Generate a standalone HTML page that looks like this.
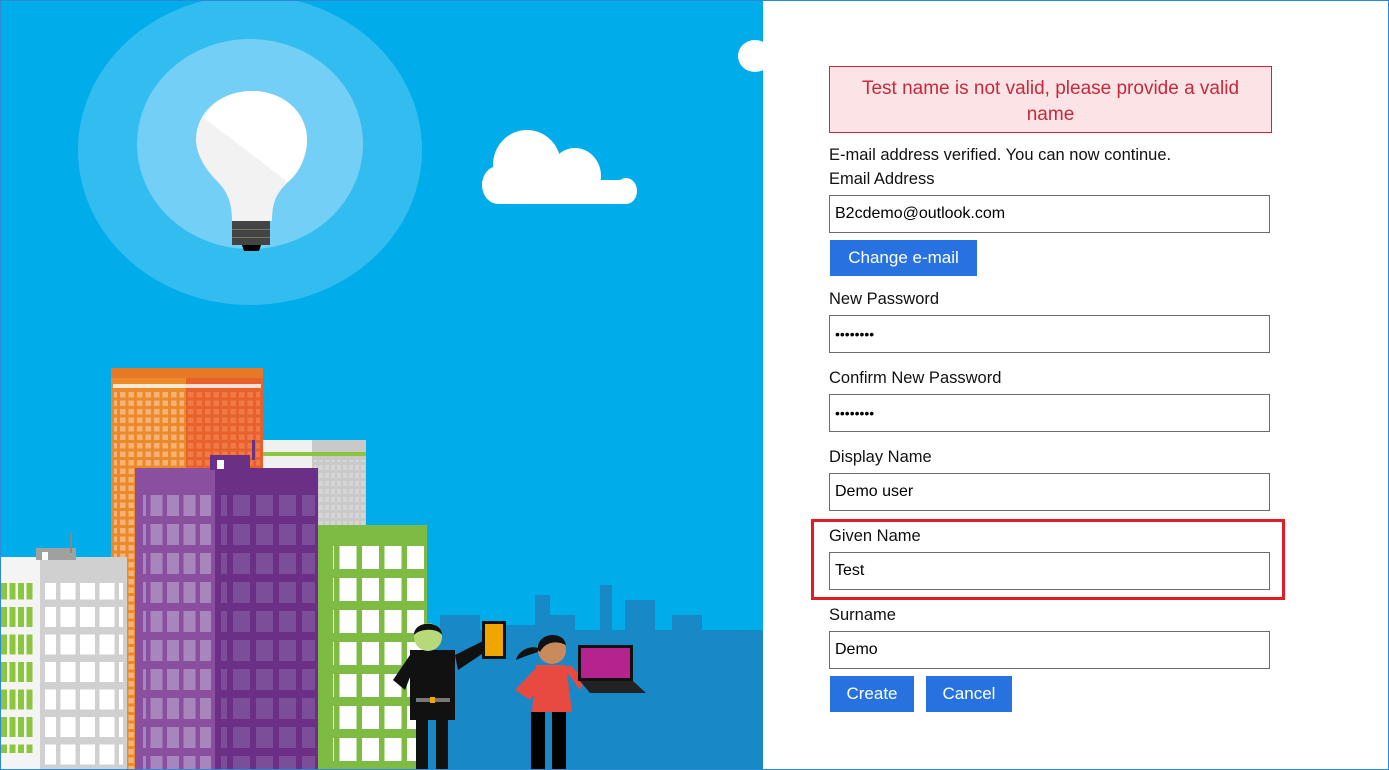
<!DOCTYPE html>
<html><head><meta charset="utf-8"><style>
*{margin:0;padding:0;box-sizing:border-box}
body{width:1389px;height:770px;overflow:hidden;background:#fff;font-family:"Liberation Sans",sans-serif;position:relative}
.frame{position:absolute;left:0;top:0;width:1389px;height:770px;border:1px solid #2a8ad8;pointer-events:none}
.lbl{position:absolute;left:829px;font-size:16.5px;color:#111;white-space:nowrap}
.inp{position:absolute;left:829px;width:441px;height:38px;border:1px solid #6b6b6b;background:#fff;font-size:16px;padding-left:5px;line-height:36px;color:#000}
.btn{position:absolute;height:36px;background:#2872e0;color:#fff;font-size:17px;line-height:36px;text-align:center}
</style></head><body>
<svg width="763" height="770" style="position:absolute;left:0;top:0">
<defs>
<pattern id="ow" width="8.5" height="8.5" patternUnits="userSpaceOnUse"><rect x="1" y="1" width="5.5" height="5.5" fill="#f5b37a"/></pattern>
<pattern id="ow2" width="8.5" height="8.5" patternUnits="userSpaceOnUse"><rect x="1" y="1" width="5.5" height="5.5" fill="#f07a45"/></pattern>
<pattern id="pw" width="16.5" height="29" patternUnits="userSpaceOnUse"><rect x="2" y="2" width="12" height="21" fill="#a985bd"/></pattern>
<pattern id="pw2" width="23" height="29" patternUnits="userSpaceOnUse"><rect x="3" y="2" width="17" height="21" fill="#7c4d99"/></pattern>
<pattern id="gw" width="22.5" height="32" patternUnits="userSpaceOnUse"><rect x="2" y="2" width="17" height="23" fill="#fff"/></pattern>
<pattern id="ww" width="19.5" height="27.5" patternUnits="userSpaceOnUse"><rect x="2" y="2" width="15" height="20" fill="#fff"/></pattern>
<pattern id="lw" width="8.5" height="27.5" patternUnits="userSpaceOnUse"><rect x="1" y="2" width="6" height="20" fill="#8cc63f"/></pattern>
<pattern id="sw" width="6" height="8" patternUnits="userSpaceOnUse"><rect x="1" y="1" width="4" height="5" fill="#d5d5d5"/></pattern>
</defs>
<rect width="763" height="770" fill="#00acea"/>
<ellipse cx="250" cy="150" rx="172" ry="155" fill="#33bcf0"/>
<ellipse cx="250" cy="144" rx="113" ry="105" fill="#73cff5"/>
<path d="M232 221 C232 200 226 190 216 180 C202 166 196 150 196 140 C196 112 220 91 252 91 C283 91 307 112 307 140 C307 155 300 172 288 182 C278 192 272 200 272 221 Z" fill="#f2f2f2"/>
<path d="M204 118 C214 100 231 91 252 91 C283 91 307 112 307 140 C307 155 300 172 288 182 Z" fill="#fff"/>
<rect x="232" y="221" width="38" height="24" fill="#444"/>
<rect x="232" y="229" width="38" height="1" fill="#776"/><rect x="232" y="237" width="38" height="1" fill="#776"/>
<path d="M242 245 L261 245 L259 251 L244 251 Z" fill="#000"/>
<g fill="#fff">
<ellipse cx="527" cy="165" rx="34" ry="35"/>
<ellipse cx="575" cy="176" rx="26" ry="28"/>
<ellipse cx="498" cy="185" rx="16" ry="19"/>
<ellipse cx="626" cy="191" rx="11" ry="13"/>
<rect x="497" y="180" width="130" height="24" rx="4"/>
</g>
<ellipse cx="755" cy="56" rx="17" ry="16" fill="#fff"/>
<!-- skyline -->
<g fill="#1888c6">
<rect x="420" y="630" width="343" height="140"/>
<rect x="440" y="615" width="40" height="30"/>
<rect x="500" y="625" width="35" height="30"/>
<rect x="535" y="595" width="15" height="60"/>
<rect x="545" y="615" width="30" height="40"/>
<rect x="600" y="585" width="12" height="60"/>
<rect x="625" y="600" width="30" height="40"/>
<rect x="672" y="615" width="30" height="40"/>
<rect x="700" y="640" width="25" height="20"/>
<rect x="712" y="630" width="8" height="20"/>
<rect x="730" y="650" width="15" height="20"/>
<rect x="748" y="660" width="15" height="30"/>
</g>
<!-- gray back building -->
<rect x="262" y="440" width="104" height="90" fill="#c9c9c9"/>
<rect x="262" y="440" width="50" height="90" fill="#f0f0f0"/>
<rect x="262" y="452" width="104" height="4" fill="#8cc63f"/>
<rect x="314" y="460" width="52" height="70" fill="url(#sw)"/>
<!-- orange -->
<rect x="111" y="368" width="152" height="402" fill="#ec8a2a"/>
<rect x="186" y="368" width="77" height="402" fill="#e8612c"/>
<rect x="111" y="368" width="152" height="10" fill="#e77825"/>
<rect x="113" y="384" width="148" height="4" fill="#fff" opacity=".8"/>
<rect x="114" y="392" width="70" height="380" fill="url(#ow)"/>
<rect x="188" y="392" width="72" height="80" fill="url(#ow2)"/>
<!-- purple -->
<rect x="135" y="468" width="183" height="302" fill="#8a4f9e"/>
<rect x="215" y="468" width="103" height="302" fill="#6b2f86"/>
<rect x="210" y="455" width="40" height="15" fill="#6b2f86"/>
<rect x="217" y="460" width="7" height="9" fill="#fff"/>
<rect x="252" y="440" width="3" height="20" fill="#6b2f86"/>
<rect x="143" y="488" width="68" height="282" fill="url(#pw)"/>
<rect x="221" y="488" width="94" height="282" fill="url(#pw2)"/>
<!-- green -->
<rect x="318" y="525" width="109" height="245" fill="#7dbb42"/>
<rect x="333" y="545" width="92" height="225" fill="url(#gw)"/>
<!-- left white/gray -->
<rect x="0" y="557" width="127" height="213" fill="#d0d0d0"/>
<rect x="0" y="557" width="40" height="213" fill="#f4f4f4"/>
<rect x="36" y="548" width="40" height="12" fill="#a0a0a0"/>
<rect x="42" y="552" width="6" height="8" fill="#fff"/>
<rect x="70" y="533" width="2" height="20" fill="#888"/>
<rect x="45" y="583" width="78" height="187" fill="url(#ww)"/>
<rect x="0" y="583" width="34" height="170" fill="url(#lw)"/>
<!-- man -->
<g>
<rect x="410" y="650" width="45" height="70" fill="#111"/>
<path d="M410 655 L393 680 L405 690 L412 672 Z" fill="#111"/>
<path d="M455 655 L485 640 L488 650 L458 670 Z" fill="#111"/>
<rect x="416" y="720" width="12" height="50" fill="#111"/><rect x="436" y="720" width="12" height="50" fill="#111"/>
<rect x="416" y="698" width="34" height="4" fill="#777"/><rect x="430" y="697" width="5" height="6" fill="#f0a500"/>
<circle cx="428" cy="637" r="14" fill="#b8d97a"/>
<path d="M414 635 C414 620 442 620 442 635 C438 628 420 628 414 635Z" fill="#111"/>
<rect x="482" y="621" width="24" height="38" fill="#111"/><rect x="485" y="624" width="18" height="32" fill="#f0a500"/>
</g>
<!-- woman -->
<g>
<path d="M536 665 L566 665 L572 712 L532 712 Z" fill="#e84a3f"/>
<path d="M536 668 L515 690 L530 700 L540 685 Z" fill="#e84a3f"/>
<path d="M564 668 L580 690 L585 680 L570 665 Z" fill="#e84a3f"/>
<rect x="531" y="712" width="14" height="58" fill="#000"/><rect x="552" y="712" width="14" height="58" fill="#000"/>
<circle cx="552" cy="650" r="14" fill="#c98b5c"/>
<path d="M538 650 C536 632 564 630 566 645 C556 640 545 642 540 652 Z" fill="#111"/>
<path d="M538 648 C528 645 518 652 516 660 C525 656 532 654 538 652Z" fill="#111"/>
<rect x="578" y="645" width="55" height="36" fill="#111"/><rect x="581" y="648" width="49" height="30" fill="#b5248e"/>
<path d="M580 681 L633 681 L646 693 L590 693 Z" fill="#222"/>
</g>
</svg>
<div style="position:absolute;left:829px;top:66px;width:443px;height:67px;background:#fce4e6;border:1px solid #d9232e;color:#c8283c;font-size:19px;text-align:center;line-height:26px;padding-top:9px">Test name is not valid, please provide a valid<br>name</div>
<div class="lbl" style="top:146px">E-mail address verified. You can now continue.</div>
<div class="lbl" style="top:170px">Email Address</div>
<div class="inp" style="top:195px">B2cdemo@outlook.com</div>
<div class="btn" style="left:830px;top:240px;width:147px">Change e-mail</div>
<div class="lbl" style="top:290px">New Password</div>
<div class="inp" style="top:315px;font-size:14px;letter-spacing:0">••••••••</div>
<div class="lbl" style="top:369px">Confirm New Password</div>
<div class="inp" style="top:394px;font-size:14px">••••••••</div>
<div class="lbl" style="top:448px">Display Name</div>
<div class="inp" style="top:473px">Demo user</div>
<div style="position:absolute;left:811px;top:519px;width:474px;height:81px;border:3px solid #e21c25"></div>
<div class="lbl" style="top:527px">Given Name</div>
<div class="inp" style="top:552px">Test</div>
<div class="lbl" style="top:606px">Surname</div>
<div class="inp" style="top:631px">Demo</div>
<div class="btn" style="left:830px;top:676px;width:84px">Create</div>
<div class="btn" style="left:926px;top:676px;width:86px">Cancel</div>
<div class="frame"></div>
</body></html>
